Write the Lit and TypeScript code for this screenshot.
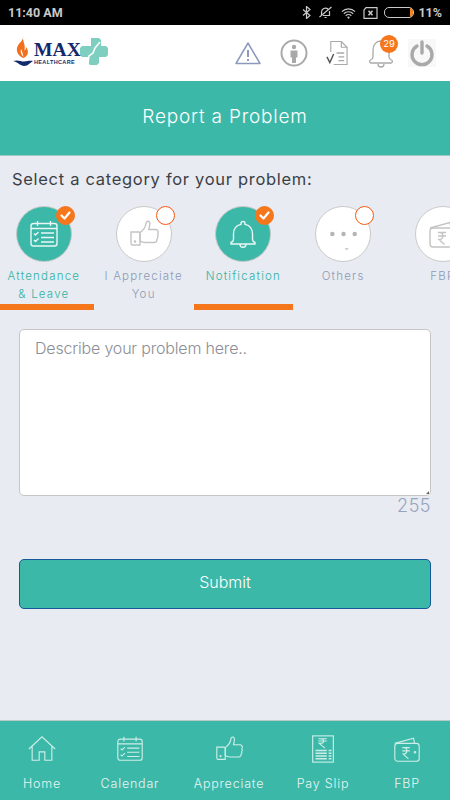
import { LitElement, html, css, svg } from "lit";
import { customElement } from "lit/decorators.js";

const cal = svg`<rect x="3" y="5.5" width="26" height="22.5" rx="2.5"/><path d="M3 10.500h26M9.500 3v5M22.500 3v5M13 15h13M13 19.500h13M13 24h13M6 15.500l1.500 1.500 3-3M6 22l1.500 1.500 3-3"/>`;
const thumb = svg`<path d="M12 14.500c3-2 5.500-5 6-9 .2-1.600 1-2.500 2.200-2.200 1.600.4 1.800 2.400 1.400 4.500l-.8 3.700h6.700c2 0 3 1.400 2.600 3l-.4 1c.8 1 .8 2-.1 3 .4 1.200.2 2.200-.7 3 .2 1.800-.8 3-2.600 3H17c-2.500 0-3.500-1-5-1.500z"/><path d="M3 14h7.500a1.500 1.500 0 0 1 1.500 1.500V27H4.500A1.500 1.500 0 0 1 3 25.500z"/><circle cx="7" cy="23.500" r=".6"/>`;
const bell = svg`<path d="M16 3.500a2 2 0 0 1 2 2v.9c4.600 1 7.500 4.800 7.500 9.600v5.500c0 1.200 1 2.300 2.500 3v1.500H4v-1.500c1.500-.7 2.500-1.800 2.500-3V16c0-4.800 2.900-8.600 7.500-9.600v-.9a2 2 0 0 1 2-2z"/><path d="M13 26c0 4.400 6 4.400 6 0"/>`;
const wallet = svg`<path d="M3 10l20-5.500 1 5.500"/><rect x="3" y="10" width="26" height="19" rx="3"/><path d="M11 14.500h8M11 18h8M13 14.500c4 0 4 7-1 7l5.500 5"/><circle cx="24.500" cy="19.500" r=".8"/>`;
const dots = svg`<circle cx="6" cy="16" r="2.100" class="fill"/><circle cx="16.500" cy="16" r="2.100" class="fill"/><circle cx="27" cy="16" r="2.100" class="fill"/><path d="M18 30h3"/>`;
const home = svg`<path d="M2 16L16 3l14 13M5.500 13v15h7.500v-9h6v9h7.500V13"/>`;
const slip = svg`<rect x="5" y="2" width="22" height="28"/><path d="M11 5h9M11 7.500h9M13 5c5 0 5 5 0 5h-1l6 5"/><path class="thick" d="M8 17.500h12M8 20.500h12M8 23.500h12M8 26.500h12M22 17.500h3M22 20.500h3M22 23.500h3M22 26.500h3"/>`;

const icon = (c: unknown, size: number) => html`<svg class="ic" width=${size} height=${size} viewBox="0 0 32 32">${c}</svg>`;

const cats = [
  { t: ["Attendance", "& Leave"], i: cal, on: true },
  { t: ["I Appreciate", "You"], i: thumb, on: false },
  { t: ["Notification"], i: bell, on: true },
  { t: ["Others"], i: dots, on: false },
  { t: ["FBP"], i: wallet, on: false },
];
const nav = [
  { t: "Home", i: home },
  { t: "Calendar", i: cal },
  { t: "Appreciate", i: thumb },
  { t: "Pay Slip", i: slip },
  { t: "FBP", i: wallet },
];

@customElement("app-root")
export class AppRoot extends LitElement {
  static styles = css`
    :host { display: flex; flex-direction: column; width: 450px; height: 800px; overflow: hidden; background: #e8ebf1; font-family: Inter, "Liberation Sans", sans-serif; }
    .status { height: 25px; background: #000; color: #c9c9c9; display: flex; align-items: center; padding: 0 8px; font: 700 12.5px Roboto, sans-serif; flex: none; }
    .status .time { flex: 1; }
    .status .sys { display: flex; align-items: center; }
    .status svg { display: block; fill: none; stroke: #c9c9c9; stroke-width: 1.2; }
    .s1 { margin-right: 7px; } .s2 { margin-right: 8px; } .s3 { margin-right: 7px; } .s4 { margin-right: 6px; }
    .batt { box-sizing: border-box; width: 30px; height: 11px; border: 1px solid #c9c9c9; border-radius: 5px; display: flex; justify-content: flex-end; margin-right: 4px; overflow: hidden; }
    .batt i { width: 3px; background: #f5871f; }
    .head { height: 56px; background: #fff; display: flex; align-items: center; padding: 0 14px 0 13px; flex: none; }
    .logo { display: flex; align-items: center; flex: 1; margin-top: -3px; }
    .brand { display: flex; flex-direction: column; margin-left: 1px; color: #12296b; width: 46px; padding-top: 4px; }
    .brand b { font: 700 19.5px/17px "Liberation Serif", serif; letter-spacing: .1px; }
    .brand span { font: 700 5.5px/7px "Liberation Sans", sans-serif; letter-spacing: .35px; margin-top: 1px; white-space: nowrap; }
    .hicons { display: flex; align-items: center; }
    .hicons svg { display: block; fill: none; }
    .warn { margin-right: 19px; }
    .info { margin-right: 18px; }
    .doc { margin-right: 19px; }
    .bellw { position: relative; margin-right: 14px; }
    .bellw svg { margin-top: 2px; }
    .pow { background: #f8f8f8; }
    .badge { position: absolute; top: -3px; right: -4px; width: 18px; height: 18px; border-radius: 50%; background: #f6761c; color: #fff; font: 400 9.5px/18px Inter, sans-serif; text-align: center; }
    .band { height: 75px; background: #3cb8a9; color: #fff; display: flex; align-items: center; justify-content: center; font-size: 19px; font-weight: 300; letter-spacing: .8px; border-bottom: 1px solid #9cc7c4; flex: none; padding-bottom: 4px; box-sizing: border-box; }
    h1 { margin: 0; padding: 13px 12px 0; font-size: 16.5px; line-height: 20px; font-weight: 400; color: #3c3f46; letter-spacing: .7px; }
    .cats { display: flex; margin: 17px 0 0 -6px; width: 510px; flex: none; }
    .cat { width: 99.75px; flex: none; height: 104px; display: flex; flex-direction: column; align-items: center; box-sizing: border-box; border-bottom: 6px solid transparent; position: relative; }
    .cat.on { border-bottom-color: #f6761c; }
    .disc { width: 54px; height: 54px; border-radius: 50%; background: #fff; border: 1px solid #c9c9c9; display: flex; align-items: center; justify-content: center; position: relative; flex: none; }
    .cat.on .disc { background: #3cb8a9; }
    .disc .ic { fill: none; stroke: #c4c4c4; stroke-width: 1.4; }
    .disc .ic .fill { fill: #b5b5b5; stroke: none; }
    .cat.on .disc .ic { stroke: #e8f7f4; }
    .tick { position: absolute; top: -1px; right: -4px; width: 17px; height: 17px; border-radius: 50%; background: #fff; border: 1px solid #f6590f; display: flex; align-items: center; justify-content: center; }
    .cat.on .tick { background: #f6761c; border-color: #f6761c; }
    .tick svg { fill: none; stroke: #fff; stroke-width: 2.2; stroke-linecap: round; stroke-linejoin: round; }
    .lbl { margin-top: 6px; font-size: 11.5px; line-height: 17.5px; font-weight: 300; letter-spacing: 1.2px; text-align: center; color: #8c9ab8; white-space: nowrap; }
    .cat.on .lbl { color: #2fb3a3; }
    .form { padding: 19px 19px 0; display: flex; flex-direction: column; flex: 1; }
    .ta { height: 167px; box-sizing: border-box; background: #fff; border: 1px solid #c6c6c6; border-radius: 5px; padding: 8px 15px; font-size: 16px; line-height: 20px; font-weight: 300; color: #8b8e95; position: relative; letter-spacing: -.18px; }
    .grip { position: absolute; right: 1px; bottom: 1px; width: 0; height: 0; border-left: 3px solid transparent; border-bottom: 3px solid #666; }
    .count { text-align: right; font-size: 18px; line-height: 20px; font-weight: 300; color: #97a4bf; letter-spacing: .5px; }
    .btn { margin-top: 43px; height: 50px; box-sizing: border-box; background: #3cb8a9; border: 1px solid #17589b; border-radius: 5px; color: #fff; display: flex; align-items: center; justify-content: center; font-size: 16px; font-weight: 300; padding-bottom: 4px; }
    .nav { height: 79px; background: #3cb8a9; border-top: 1px solid #b9c9c8; display: grid; grid-template-columns: 84px 92px 106px 82px 86px; flex: none; }
    .ni { display: flex; flex-direction: column; align-items: center; color: #e6f6f3; padding-top: 13px; font-size: 12.5px; letter-spacing: .8px; font-weight: 300; }
    .ni .ic { fill: none; stroke: #cdeee8; stroke-width: 1.2; display: block; }
    .ni .ic .thick { stroke-width: 1.6; }
    .ni span { margin-top: 12px; line-height: 16px; white-space: nowrap; }
  `;

  render() {
    return html`
      <div class="status">
        <div class="time">11:40 AM</div>
        <div class="sys">
          <svg class="s1" width="9" height="13" viewBox="0 0 9 13"><path d="M1 3.500l7 6-3.500 3V.5l3.500 3-7 6"/></svg>
          <svg class="s2" width="15" height="13" viewBox="0 0 14 13"><path d="M1 11L13 1M3 9.500V6a4 4 0 0 1 6.500-3M11 5v4.500H4.500M6 11.500h2"/></svg>
          <svg class="s3" width="15" height="12" viewBox="0 0 16 12"><path d="M1 4.500a10 10 0 0 1 14 0M3 6.800a7 7 0 0 1 10 0M5 9a4 4 0 0 1 6 0"/><circle cx="8" cy="10.800" r=".6"/></svg>
          <svg class="s4" width="15" height="12" viewBox="0 0 15 12"><path d="M3 .7h11v10.600H1V3z"/><path d="M5.500 3.800l4 4.400m0-4.400l-4 4.400" stroke-width="1.600"/></svg>
          <div class="batt"><i></i></div>
          <span>11%</span>
        </div>
      </div>
      <div class="head">
        <div class="logo">
          <svg width="20" height="32" viewBox="0 0 20 32">
            <path fill="#f0701e" d="M10 0c1.500 4-5 7-6 12-.8 4 1.500 8 6.500 10 3.500-1.500 4.700-4 4.400-7-.3-2-1.200-3-2-4 .2 2-.5 3-1.500 3.500C13 9 9.500 6 10 0zM8 13c1 2 2 5 2.500 8-2-2-3.500-5-2.500-8z"/>
            <path fill="#12296b" d="M0 25c5-1.500 8 .5 11 .5 3 0 5-1 9-.5-3 1.500-4.500 5-9 5-3.500 0-6-4-11-5z"/>
          </svg>
          <div class="brand"><b>MAX</b><span>HEALTHCARE</span></div>
          <svg width="28" height="30" viewBox="0 0 28 30"><path fill="#7fcfc1" d="M11 1h8l2 2v6h5l2 2v7l-2 2h-7v6l-2 2h-7l-2-2v-6H2l-2-2v-7l2-2h9z"/><path stroke="#fff" stroke-width="1.500" fill="none" d="M20 5l-5 6-2 5-4 3-1 8"/></svg>
        </div>
        <div class="hicons">
          <svg class="warn" width="26" height="24" viewBox="0 0 26 24"><path stroke="#8c9ac0" stroke-width="1.500" stroke-linejoin="round" d="M13 2L25 22.500H1z"/><path stroke="#8c9ac0" stroke-width="2" d="M13 9v7M13 18v2"/></svg>
          <svg class="info" width="28" height="28" viewBox="0 0 28 28"><circle cx="14" cy="14" r="12.500" stroke="#a9a9a9" stroke-width="2"/><circle cx="14" cy="8" r="2.200" fill="#a9a9a9"/><path fill="#a9a9a9" d="M10.500 11.500h7v7h-1.500V24h-4v-5.500h-1.500z"/></svg>
          <svg class="doc" width="23" height="26" viewBox="0 0 24 26"><path stroke="#a9a9a9" stroke-width="1.200" d="M5 12V1h11l6 6v18H8M16 1v6h6"/><path stroke="#a9a9a9" stroke-width="1.400" d="M11 13h8M13 17h6M13 21h6"/><path stroke="#555" stroke-width="1.500" d="M1 17l3 6 4-9"/></svg>
          <div class="bellw">
            <svg width="26" height="28" viewBox="0 0 26 28"><path stroke="#a9a9a9" stroke-width="1.300" d="M13 1c-5 0-8 4-8 9v7c0 1.500-1 2.500-3 3.500a1.500 1.500 0 0 0 1 2.500h20a1.500 1.500 0 0 0 1-2.500c-2-1-3-2-3-3.500V10c0-5-3-9-8-9zM10 24c0 4 6 4 6 0"/></svg>
            <div class="badge">29</div>
          </div>
          <svg class="pow" width="28" height="28" viewBox="0 0 28 28"><path stroke="#a9a9a9" stroke-width="3.400" stroke-linecap="round" d="M9 7a10 10 0 1 0 10 0M14 3v11"/></svg>
        </div>
      </div>
      <div class="band">Report a Problem</div>
      <h1>Select a category for your problem:</h1>
      <div class="cats">
        ${cats.map(c => html`<div class="cat ${c.on ? "on" : ""}">
          <div class="disc">${icon(c.i, c.i === dots ? 34 : 32)}
            <div class="tick">${c.on ? html`<svg width="11" height="9" viewBox="0 0 11 9"><path d="M1.500 4.500l3 3 5-6"/></svg>` : ""}</div>
          </div>
          <div class="lbl">${c.t.map(l => html`<div>${l}</div>`)}</div>
        </div>`)}
      </div>
      <div class="form">
        <div class="ta">Describe your problem here..<i class="grip"></i></div>
        <div class="count">255</div>
        <div class="btn">Submit</div>
      </div>
      <div class="nav">
        ${nav.map(n => html`<div class="ni">${icon(n.i, 30)}<span>${n.t}</span></div>`)}
      </div>
    `;
  }
}
